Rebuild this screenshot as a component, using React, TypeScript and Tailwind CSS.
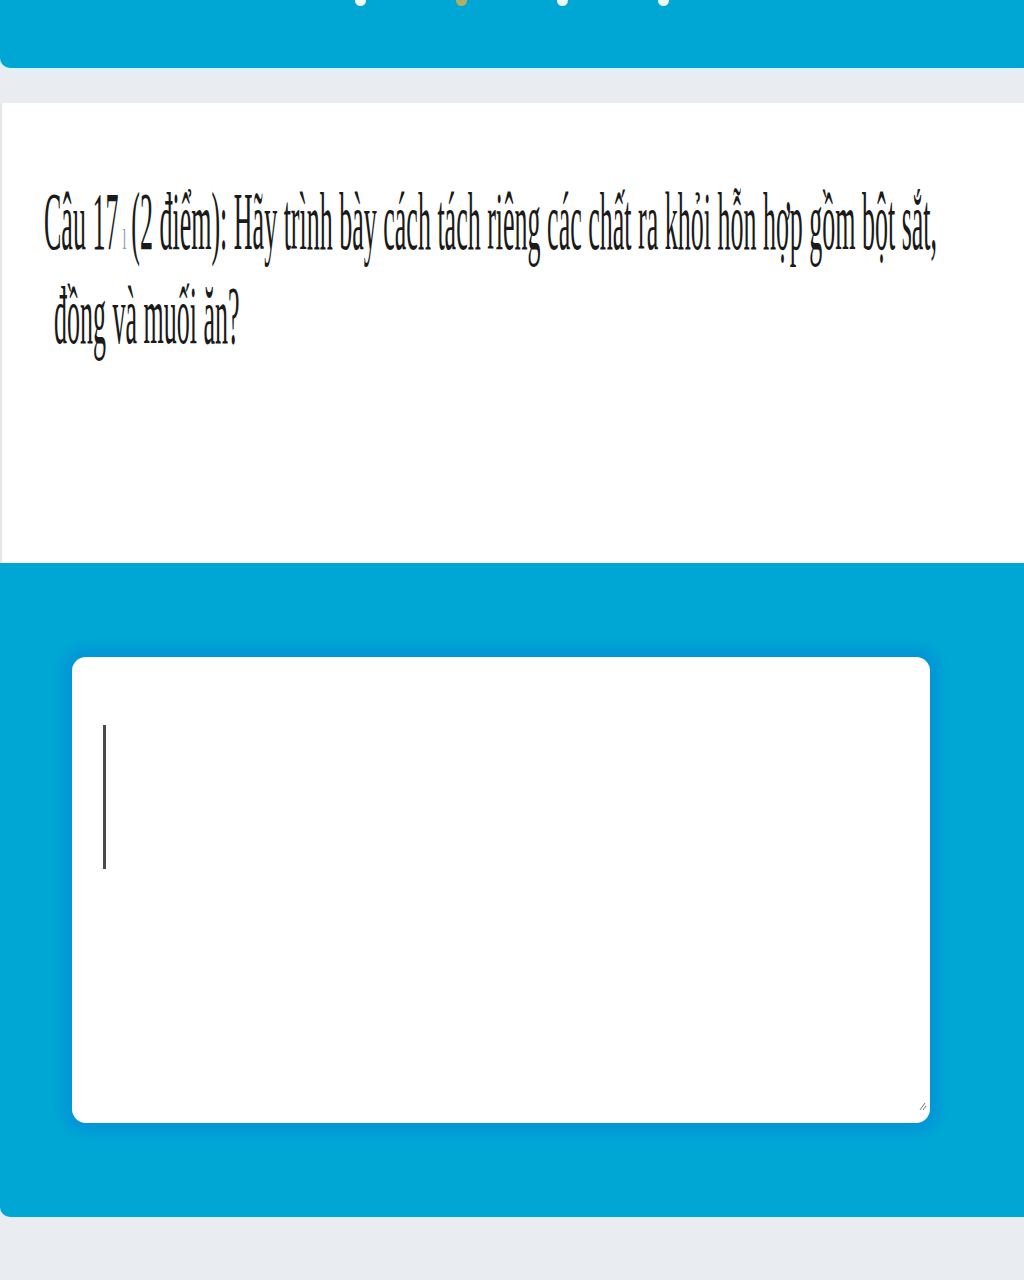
export default function App() {
  return (
    <div className="min-h-[1280px] w-[1024px] overflow-hidden bg-[#e9ecf1]">
      {/* Header */}
      <div className="relative h-[68px] rounded-bl-[10px] bg-[#00a7d4] shadow-[0_3px_6px_#d6f6fc]">
        <div className="flex gap-[90px] pl-[355px]">
          <span className="-mt-[5px] h-[11px] w-[11px] rounded-full bg-[#eefaff]" />
          <span className="-mt-[5px] h-[11px] w-[11px] rounded-full bg-[#b4ae63]" />
          <span className="-mt-[5px] h-[11px] w-[11px] rounded-full bg-[#eefaff]" />
          <span className="-mt-[5px] h-[11px] w-[11px] rounded-full bg-[#eefaff]" />
        </div>
      </div>

      {/* Question card */}
      <div className="mt-[35px] h-[460px] overflow-hidden border-l-2 border-[#e4e6ea] bg-white pl-[42px] pt-[80px]">
        <p className="origin-top-left scale-y-[3.14] font-['Liberation_Serif','Times_New_Roman',serif] text-[26px] leading-[25.5px] text-[#1a1a1a] whitespace-nowrap">
          Câu 17<span className="ml-[4px] mr-[5px] text-[14px] text-gray-400">ı</span>(2 điểm): Hãy trình bày cách tách riêng các chất ra khỏi hỗn hợp gồm bột sắt,
          <br />
          <span className="ml-[10px]">đồng và muối ăn?</span>
        </p>
      </div>

      {/* Answer area */}
      <div className="rounded-bl-[10px] bg-[#00a7d4] px-[72px] pb-[94px] pt-[94px] pr-[94px]">
        <div className="relative h-[466px] rounded-[14px] bg-white shadow-[0_0_12px_10px_#0396d6]">
          <div className="absolute left-[31px] top-[68px] h-[144px] w-[3px] bg-[#4a4a4a]" />
          <svg className="absolute bottom-[12px] right-[3px]" width="8" height="10" viewBox="0 0 8 10">
            <path d="M1 9 L6 2 M4 9 L7 5" stroke="#777" strokeWidth="1" fill="none" />
          </svg>
        </div>
      </div>
    </div>
  );
}
